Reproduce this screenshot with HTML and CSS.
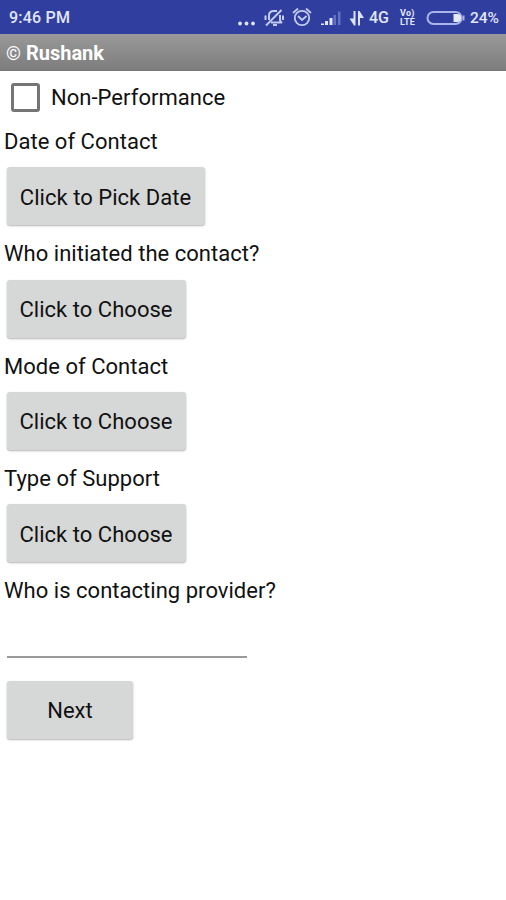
FILE: index.html
```html
<!DOCTYPE html>
<html lang="en">
<head>
    <meta charset="UTF-8">
    <meta name="viewport" content="width=device-width, initial-scale=1.0">
    <title>Rushank</title>
    <link rel="stylesheet" href="styles.css">
</head>
<body>
    <div class="status-bar">
        <span class="time">9:46 PM</span>
        <svg class="status-icons" width="136" height="34" viewBox="0 0 136 34">
            <!-- more notifications -->
            <g fill="#dde2fb">
                <circle cx="10" cy="23.500" r="1.900"/>
                <circle cx="16.500" cy="23.500" r="1.900"/>
                <circle cx="23" cy="23.500" r="1.900"/>
            </g>
            <!-- silent mode -->
            <g fill="none" stroke="#c3cbf3" stroke-width="2" stroke-linejoin="round">
                <path d="M39 20V15.500q0-4.500 5-4.500h3M50 15v5.500l1.500 2H41"/>
                <path d="M36 25.500L51.500 10M35.500 15.500v4.500M53 15.500v4.500M43 25h4"/>
            </g>
            <!-- alarm -->
            <g fill="none" stroke="#c3cbf3" stroke-width="1.800" stroke-linecap="round">
                <circle cx="72" cy="18" r="7.200"/>
                <path d="M63.500 12.500l4-3.500M80.500 12.500L76.500 9M68.500 16.500l3.500 3.500 4-3.500"/>
            </g>
            <!-- signal -->
            <path fill="#e3e7fc" d="M91 23.500h3v1.500h-3zM95 21h3v4h-3zM99.500 18h3v7h-3z"/>
            <path fill="#6371c3" d="M103.500 15h2.500v10h-2.500zM108 11.500h2.500V25H108z"/>
            <!-- mobile data -->
            <path fill="#dde2fb" d="M123.500 11h2v14.500h-1.500L119.500 18.500h4zM128 25.500V11h1.500l4.500 7h-4v7.500z"/>
        </svg>
        <span class="network">4G</span>
        <span class="volte">Vo)<br>LTE</span>
        <svg class="battery" width="40" height="16" viewBox="0 0 40 16">
            <rect x="1.500" y="2" width="34" height="12" rx="6" fill="none" stroke="#a9b4e8" stroke-width="2"/>
            <path fill="#e6eafd" d="M27.500 4h3.500a4 4 0 0 1 0 8h-3.500z"/>
            <path stroke="#a9b4e8" stroke-width="2" d="M37.500 5.500v5"/>
        </svg>
        <span class="percent">24%</span>
    </div>

    <div class="title-bar"><span class="copyright">©</span> Rushank</div>

    <div class="form">
        <label class="check-row"><span class="checkbox"></span>Non-Performance</label>

        <div class="label">Date of Contact</div>
        <button class="btn btn-date">Click to Pick Date</button>

        <div class="label">Who initiated the contact?</div>
        <button class="btn">Click to Choose</button>

        <div class="label">Mode of Contact</div>
        <button class="btn">Click to Choose</button>

        <div class="label">Type of Support</div>
        <button class="btn">Click to Choose</button>

        <div class="label">Who is contacting provider?</div>
        <input class="provider" type="text">
        <button class="btn btn-next">Next</button>
    </div>
</body>
</html>
```
FILE: styles.css
```css
* {
    box-sizing: border-box;
}

body {
    margin: 0;
    min-height: 900px;
    background-color: #fff;
    font-family: Roboto, "Liberation Sans", sans-serif;
    color: #111;
}

.status-bar {
    display: flex;
    align-items: center;
    height: 34px;
    padding: 1px 0 0 9px;
    background-color: #303f9f;
    color: #e1e6fb;
    font-size: 16px;
    font-weight: 500;
}

.time {
    width: 221px;
    letter-spacing: 0.2px;
}

.status-icons {
    flex: none;
    margin-top: -2px;
}

.network {
    width: 31px;
    margin-left: 3px;
}

.volte {
    width: 26px;
    font-size: 9px;
    font-weight: 700;
    letter-spacing: 0.2px;
    line-height: 8.5px;
}

.battery {
    flex: none;
    margin-right: 4px;
}

.percent {
    font-size: 15.5px;
}

.title-bar {
    height: 37px;
    padding-left: 6px;
    border-bottom: 1px solid #777;
    background: linear-gradient(#999, #7d7d7d);
    color: #fff;
    font-size: 20px;
    font-weight: 700;
    line-height: 38px;
}

.copyright {
    font-size: 19px;
    font-weight: 400;
}

.form {
    display: flex;
    flex-direction: column;
    align-items: flex-start;
    padding: 0 4px;
    font-size: 22px;
    letter-spacing: 0.03px;
}

.check-row {
    display: flex;
    align-items: center;
    height: 53px;
    padding-left: 7px;
}

.checkbox {
    width: 29px;
    height: 29px;
    margin-right: 11px;
    border: 3px solid #757575;
    border-radius: 3px;
}

.label {
    height: 35.3px;
    line-height: 35px;
}

.btn {
    width: 179px;
    height: 58px;
    margin: 8px 0 11px 3px;
    padding: 2px 1px 0 0;
    border: none;
    border-radius: 3px;
    background-color: #d6d8d7;
    box-shadow: 0 1px 2px rgba(0, 0, 0, 0.3);
    color: #111;
    font: inherit;
    letter-spacing: inherit;
}

.btn-date {
    width: 198px;
}

.provider {
    width: 240px;
    height: 50px;
    margin-left: 3px;
    padding: 0;
    border: none;
    border-bottom: 2px solid #999;
    background: none;
    font: inherit;
    outline: none;
}

.btn-next {
    width: 126px;
    margin-top: 23px;
    padding: 0;
}
```
